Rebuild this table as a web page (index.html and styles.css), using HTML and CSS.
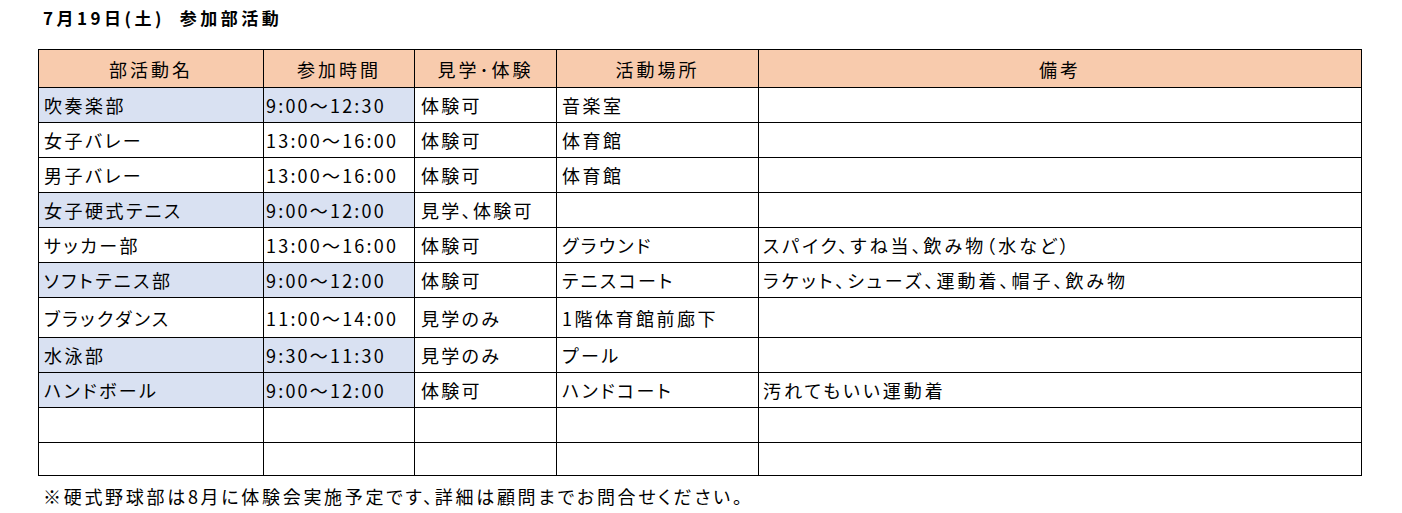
FILE: index.html
```html
<!DOCTYPE html>
<html lang="ja">
<head>
<meta charset="utf-8">
<title>7月19日(土) 参加部活動</title>
<link rel="stylesheet" href="styles.css">
</head>
<body>
<div class="page">
  <h1 class="title">7月19日(土)&nbsp; 参加部活動</h1>
  <table class="clubs">
    <colgroup>
      <col class="c-name">
      <col class="c-time">
      <col class="c-visit">
      <col class="c-place">
      <col class="c-note">
    </colgroup>
    <thead>
      <tr class="head">
        <th>部活動名</th>
        <th>参加時間</th>
        <th>見学･体験</th>
        <th>活動場所</th>
        <th>備考</th>
      </tr>
    </thead>
    <tbody>
      <tr><td class="name hl">吹奏楽部</td><td class="time hl">9:00～12:30</td><td class="visit">体験可</td><td class="place">音楽室</td><td class="note"></td></tr>
      <tr><td class="name">女子バレー</td><td class="time">13:00～16:00</td><td class="visit">体験可</td><td class="place">体育館</td><td class="note"></td></tr>
      <tr><td class="name">男子バレー</td><td class="time">13:00～16:00</td><td class="visit">体験可</td><td class="place">体育館</td><td class="note"></td></tr>
      <tr><td class="name hl">女子硬式テニス</td><td class="time hl">9:00～12:00</td><td class="visit">見学、体験可</td><td class="place"></td><td class="note"></td></tr>
      <tr><td class="name">サッカー部</td><td class="time">13:00～16:00</td><td class="visit">体験可</td><td class="place">グラウンド</td><td class="note">スパイク、すね当、飲み物（水など）</td></tr>
      <tr><td class="name hl">ソフトテニス部</td><td class="time hl">9:00～12:00</td><td class="visit">体験可</td><td class="place">テニスコート</td><td class="note">ラケット、シューズ、運動着、帽子、飲み物</td></tr>
      <tr class="tall"><td class="name">ブラックダンス</td><td class="time">11:00～14:00</td><td class="visit">見学のみ</td><td class="place">1階体育館前廊下</td><td class="note"></td></tr>
      <tr><td class="name hl">水泳部</td><td class="time hl">9:30～11:30</td><td class="visit">見学のみ</td><td class="place">プール</td><td class="note"></td></tr>
      <tr><td class="name hl">ハンドボール</td><td class="time hl">9:00～12:00</td><td class="visit">体験可</td><td class="place">ハンドコート</td><td class="note">汚れてもいい運動着</td></tr>
      <tr><td class="name"></td><td class="time"></td><td class="visit"></td><td class="place"></td><td class="note"></td></tr>
      <tr class="short"><td class="name"></td><td class="time"></td><td class="visit"></td><td class="place"></td><td class="note"></td></tr>
    </tbody>
  </table>
  <p class="footnote">※硬式野球部は8月に体験会実施予定です、詳細は顧問までお問合せください。</p>
</div>
</body>
</html>
```

FILE: styles.css
```css
html, body {
  margin: 0;
  padding: 0;
  background: #ffffff;
}

.page {
  padding: 6px 0 0 38px;
  font-family: "Noto Sans CJK JP", "Noto Sans", sans-serif;
  font-feature-settings: "palt";
  color: #000000;
}

.title {
  margin: 0 0 0 5px;
  font-size: 17px;
  font-weight: 600;
  line-height: 24px;
  height: 43px;
  letter-spacing: 3.5px;
}

.clubs {
  border-collapse: collapse;
  table-layout: fixed;
  width: 1323px;
  font-size: 18px;
  line-height: 22px;
}

.c-name { width: 225px; }
.c-time { width: 151px; }
.c-visit { width: 142px; }
.c-place { width: 202px; }
.c-note { width: 603px; }

.clubs th,
.clubs td {
  border: 1px solid #000000;
  padding: 0;
  white-space: nowrap;
  overflow: hidden;
  vertical-align: middle;
  font-weight: 400;
}

.clubs .head th {
  height: 37px;
  background: #f8cbad;
  text-align: center;
  letter-spacing: 3px;
}

.clubs tbody tr td {
  height: 34px;
}

.clubs tbody tr.tall td {
  height: 39px;
}

.clubs tbody tr.short td {
  height: 32px;
}

.clubs td.hl {
  background: #d9e1f2;
}

.clubs td.name { padding-left: 5px; letter-spacing: 2.5px; }
.clubs td.time { padding-left: 2px; letter-spacing: 2.2px; }
.clubs td.visit { padding-left: 6px; letter-spacing: 2.3px; }
.clubs td.place { padding-left: 5px; letter-spacing: 2.5px; }
.clubs td.note { padding-left: 4px; letter-spacing: 3px; }

.footnote {
  margin: 8px 0 0 5px;
  font-size: 18px;
  line-height: 24px;
  letter-spacing: 2.7px;
}
```
